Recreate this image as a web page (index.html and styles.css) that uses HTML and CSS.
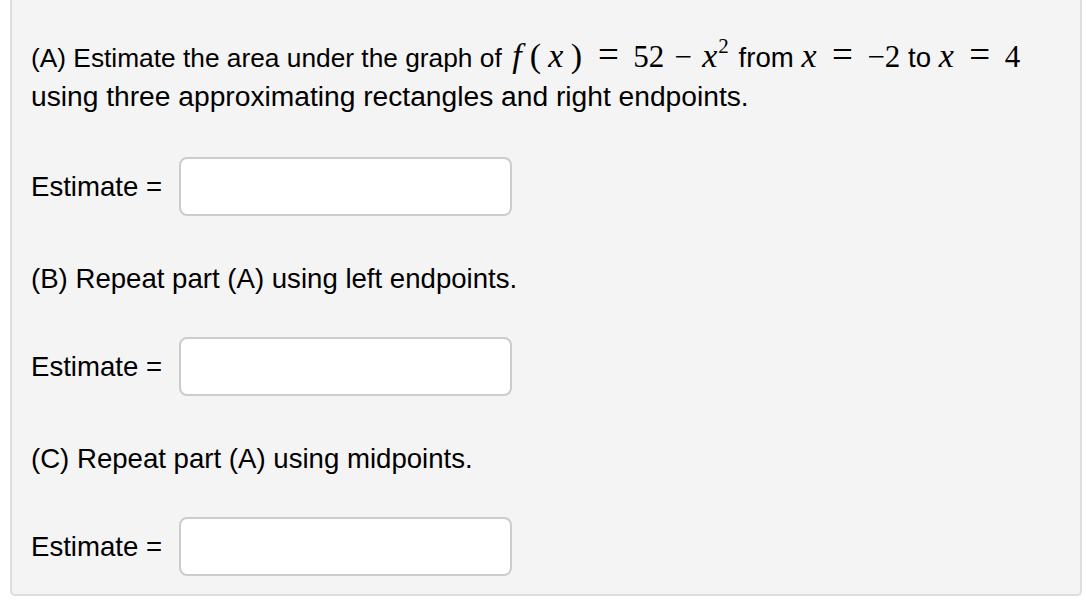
FILE: index.html
```html
<!DOCTYPE html>
<html>
<head>
<meta charset="utf-8">
<link rel="stylesheet" href="styles.css">
</head>
<body>
<div class="panel">
  <p class="question"><span class="lead">(A) Estimate the area under the graph of</span> <span class="math"><i class="fn">f</i><span class="paren">(</span><i class="var">x</i><span class="paren">)</span><span class="op">=</span>52<span class="op minus">−</span><i class="var tight">x</i><sup>2</sup></span> from <span class="math"><i class="var tight">x</i><span class="op">=</span>−2</span> to <span class="math"><i class="var tight">x</i><span class="op">=</span>4</span><br><span class="second">using three approximating rectangles and right endpoints.</span></p>
  <div class="answer-row">
    <span class="label">Estimate =</span>
    <input class="answer" type="text">
  </div>
  <p class="question part">(B) Repeat part (A) using left endpoints.</p>
  <div class="answer-row">
    <span class="label">Estimate =</span>
    <input class="answer" type="text">
  </div>
  <p class="question part">(C) Repeat part (A) using midpoints.</p>
  <div class="answer-row">
    <span class="label">Estimate =</span>
    <input class="answer" type="text">
  </div>
</div>
</body>
</html>
```
FILE: styles.css
```css
html, body {
  margin: 0;
  padding: 0;
  background: #ffffff;
}

body {
  font-family: "Liberation Sans", Arial, Helvetica, sans-serif;
  color: #000;
}

.panel {
  margin: 0 4px 0 10px;
  background: #f4f4f4;
  border: 2px solid #dddddd;
  border-top: none;
  border-radius: 0 0 5px 5px;
  padding: 39px 0 18px 19px;
}

.question {
  margin: 0;
  font-size: 27.6px;
  line-height: 38px;
}

.question .lead {
  font-size: 26.3px;
}

.question .second {
  font-size: 28.2px;
}

.question.part {
  margin-top: 44px;
}

.math {
  font-family: "Liberation Serif", "Times New Roman", serif;
  font-size: 31px;
  line-height: 0;
}

.math i {
  font-style: italic;
}

.math .fn,
.math .paren,
.math .var {
  font-size: 34px;
}

.math .fn {
  display: inline-block;
  width: 19px;
  padding-left: 3px;
  box-sizing: border-box;
  text-align: left;
}

.math .paren {
  display: inline-block;
  width: 14px;
  text-align: center;
}

.math .var {
  display: inline-block;
  width: 27px;
  text-align: center;
}

.math .var.tight {
  width: 16px;
  text-align: left;
}

.math .op {
  display: inline-block;
  width: 50px;
  text-align: center;
  font-size: 37px;
}

.math .op.minus {
  width: 38px;
  font-size: 31px;
}

.math sup {
  font-size: 21px;
  line-height: 0;
  vertical-align: 0;
  position: relative;
  top: -14px;
  margin-right: 2px;
}

.answer-row {
  display: flex;
  align-items: center;
  gap: 17px;
  margin-top: 41px;
}

.part + .answer-row {
  margin-top: 39px;
}

.label {
  font-size: 27.6px;
}

.answer {
  box-sizing: border-box;
  width: 333px;
  height: 59px;
  margin: 0;
  padding: 0 10px;
  background: #ffffff;
  border: 2px solid #cccccc;
  border-radius: 8px;
  font-size: 24px;
  outline: none;
}
```
